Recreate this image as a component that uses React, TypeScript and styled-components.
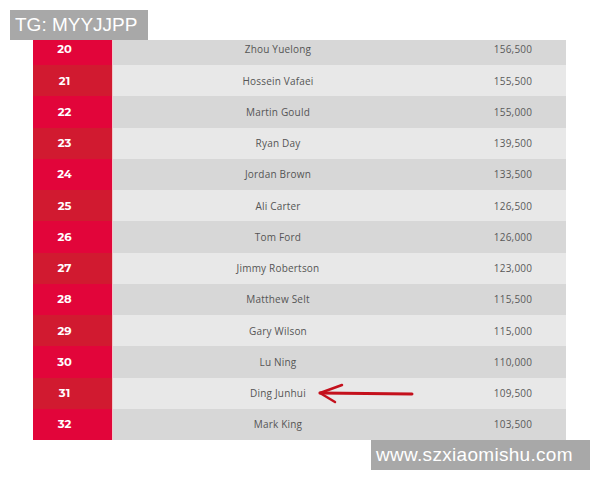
import * as React from 'react'
import styled, { createGlobalStyle } from 'styled-components'

const GlobalStyle = createGlobalStyle`
  html, body {
    margin: 0;
    padding: 0;
    background: #ffffff;
  }
  body {
    width: 600px;
    height: 480px;
    overflow: hidden;
    font-family: 'Open Sans', 'Liberation Sans', sans-serif;
  }
`

const ROW_HEIGHT = 31.25

interface Player {
  rank: number
  name: string
  money: string
}

const players: Player[] = [
  { rank: 20, name: 'Zhou Yuelong', money: '156,500' },
  { rank: 21, name: 'Hossein Vafaei', money: '155,500' },
  { rank: 22, name: 'Martin Gould', money: '155,000' },
  { rank: 23, name: 'Ryan Day', money: '139,500' },
  { rank: 24, name: 'Jordan Brown', money: '133,500' },
  { rank: 25, name: 'Ali Carter', money: '126,500' },
  { rank: 26, name: 'Tom Ford', money: '126,000' },
  { rank: 27, name: 'Jimmy Robertson', money: '123,000' },
  { rank: 28, name: 'Matthew Selt', money: '115,500' },
  { rank: 29, name: 'Gary Wilson', money: '115,000' },
  { rank: 30, name: 'Lu Ning', money: '110,000' },
  { rank: 31, name: 'Ding Junhui', money: '109,500' },
  { rank: 32, name: 'Mark King', money: '103,500' },
]

const Page = styled.div`
  position: relative;
  width: 600px;
  height: 480px;
  padding: 40px 34px 0 33px;
  box-sizing: border-box;
`

const TableClip = styled.div`
  width: 533px;
  height: 400px;
  overflow: hidden;
`

const Table = styled.div`
  margin-top: -6.25px;
  display: flex;
  flex-direction: column;
`

const Row = styled.div<{ odd: boolean }>`
  position: relative;
  height: ${ROW_HEIGHT}px;
  display: grid;
  grid-template-columns: 80px 330px 1fr;
  align-items: center;
  background: ${({ odd }) => (odd ? '#e8e8e8' : '#d7d7d7')};
`

const RankCell = styled.div<{ odd: boolean }>`
  height: 100%;
  display: flex;
  align-items: center;
  justify-content: center;
  padding-right: 16px;
  box-sizing: border-box;
  background: ${({ odd }) => (odd ? '#d11a30' : '#e2053a')};
  color: #ffffff;
  font-family: 'Montserrat', 'Open Sans', 'Liberation Sans', sans-serif;
  font-weight: 700;
  font-size: 11.5px;
  border-right: 1px solid #f0c8cc;
`

const NameCell = styled.div`
  text-align: center;
  color: #555555;
  font-size: 10px;
  letter-spacing: 0.2px;
`

const MoneyCell = styled.div`
  text-align: center;
  padding-left: 17px;
  color: #5a5a5a;
  font-size: 10px;
  letter-spacing: 0.2px;
`

const Arrow = styled.svg`
  position: absolute;
  left: 283px;
  top: 4px;
`

const Watermark = styled.div`
  position: absolute;
  background: #a8a8a8;
  color: #ffffff;
  font-family: 'Liberation Sans', Arial, sans-serif;
  font-size: 19px;
  height: 30px;
  line-height: 30px;
  box-sizing: border-box;
  white-space: nowrap;
`

const TopMark = styled(Watermark)`
  left: 10px;
  top: 10px;
  width: 138px;
  padding-left: 5px;
`

const BottomMark = styled(Watermark)`
  left: 371px;
  top: 440px;
  width: 219px;
  padding-left: 5px;
  letter-spacing: 0.3px;
`

const App: React.FC = () => {
  return (
    <>
      <GlobalStyle />
      <Page>
        <TableClip>
          <Table>
            {players.map((p) => {
              const odd = p.rank % 2 === 1
              return (
                <Row key={p.rank} odd={odd}>
                  <RankCell odd={odd}>{p.rank}</RankCell>
                  <NameCell>{p.name}</NameCell>
                  <MoneyCell>{p.money}</MoneyCell>
                  {p.rank === 31 && (
                    <Arrow width="100" height="24" viewBox="0 0 100 24">
                      <path
                        d="M4 11 L96 12"
                        stroke="#c4101c"
                        strokeWidth="3"
                        strokeLinecap="round"
                        fill="none"
                      />
                      <path
                        d="M26 3 L4 11 L19 20"
                        stroke="#c4101c"
                        strokeWidth="2.5"
                        strokeLinecap="round"
                        strokeLinejoin="round"
                        fill="none"
                      />
                    </Arrow>
                  )}
                </Row>
              )
            })}
          </Table>
        </TableClip>
        <TopMark>TG: MYYJJPP</TopMark>
        <BottomMark>www.szxiaomishu.com</BottomMark>
      </Page>
    </>
  )
}

export default App
